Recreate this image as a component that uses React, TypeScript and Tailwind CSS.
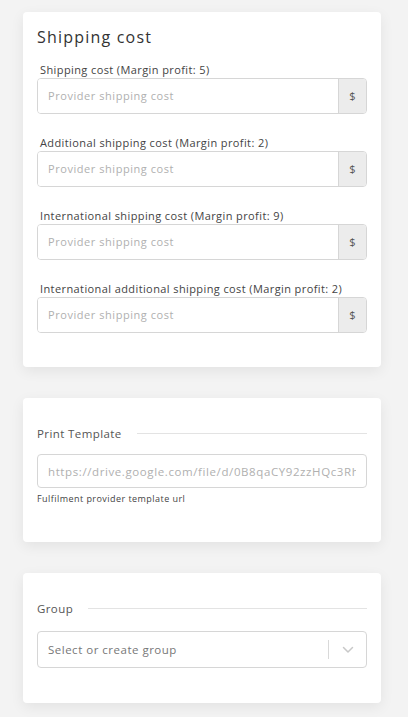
import React from "react";

const costFields = [
  "Shipping cost (Margin profit: 5)",
  "Additional shipping cost (Margin profit: 2)",
  "International shipping cost (Margin profit: 9)",
  "International additional shipping cost (Margin profit: 2)",
];

function SectionTitle({ label }: { label: string }) {
  return (
    <div className="flex items-center gap-[15px]">
      <span className="text-[11.5px] font-medium tracking-[0.4px] text-[#555]">{label}</span>
      <div className="h-px flex-1 bg-[#e3e3e3]" />
    </div>
  );
}

export default function App() {
  return (
    <div
      className="min-h-[717px] w-[408px] bg-[#f3f3f3] pl-[23px] pr-[27px] pt-[12px] pb-[14px]"
      style={{ fontFamily: '"Open Sans", "Liberation Sans", sans-serif' }}
    >
      {/* Shipping cost */}
      <div className="rounded-[4px] bg-white px-[14px] pt-[14px] pb-[34px] shadow-[0_4px_14px_rgba(0,0,0,0.07)]">
        <h3 className="text-[16px] leading-[22px] tracking-[1.2px] text-[#333]">
          Shipping cost
        </h3>
        <div className="mt-[15px] flex flex-col gap-[22px]">
          {costFields.map((label) => (
            <div key={label}>
              <label className="block pl-[3px] text-[11px] font-medium leading-[14px] tracking-[0.4px] text-[#444]">
                {label}
              </label>
              <div className="mt-[1px] flex h-[36px] overflow-hidden rounded-[4px] border border-[#d6d6d6]">
                <input
                  placeholder="Provider shipping cost"
                  className="min-w-0 flex-1 bg-white px-[10px] text-[11px] tracking-[0.55px] text-[#444] outline-none placeholder:text-[#b0b0b0]"
                />
                <span className="flex w-[28px] items-center justify-center border-l border-[#d6d6d6] bg-[#ececec] text-[11px] text-[#555]">
                  $
                </span>
              </div>
            </div>
          ))}
        </div>
      </div>

      {/* Print template */}
      <div className="mt-[31px] rounded-[4px] bg-white px-[14px] pt-[27px] pb-[36px] shadow-[0_4px_14px_rgba(0,0,0,0.07)]">
        <SectionTitle label="Print Template" />
        <input
          placeholder="https://drive.google.com/file/d/0B8qaCY92zzHQc3Rh"
          className="mt-[12px] block h-[34px] w-full rounded-[4px] border border-[#d6d6d6] px-[10px] text-[11.5px] tracking-[0.6px] outline-none placeholder:text-[#b0b0b0]"
        />
        <p className="mt-[4px] text-[9px] font-medium tracking-[0.45px] text-[#444]">
          Fulfilment provider template url
        </p>
      </div>

      {/* Group */}
      <div className="mt-[31px] rounded-[4px] bg-white px-[14px] pt-[27px] pb-[35px] shadow-[0_4px_14px_rgba(0,0,0,0.07)]">
        <SectionTitle label="Group" />
        <div className="mt-[14px] flex h-[37px] items-center rounded-[4px] border border-[#d6d6d6] pl-[10px]">
          <span className="flex-1 text-[11.5px] tracking-[0.5px] text-[#777]">
            Select or create group
          </span>
          <div className="h-[19px] w-px bg-[#d9d9d9]" />
          <div className="flex w-[37px] items-center justify-center">
            <svg width="12" height="8" viewBox="0 0 12 8" fill="none">
              <path
                d="M1.5 1.5 6 6l4.5-4.5"
                stroke="#c8c8c8"
                strokeWidth="1.5"
                strokeLinecap="round"
                strokeLinejoin="round"
              />
            </svg>
          </div>
        </div>
      </div>
    </div>
  );
}
